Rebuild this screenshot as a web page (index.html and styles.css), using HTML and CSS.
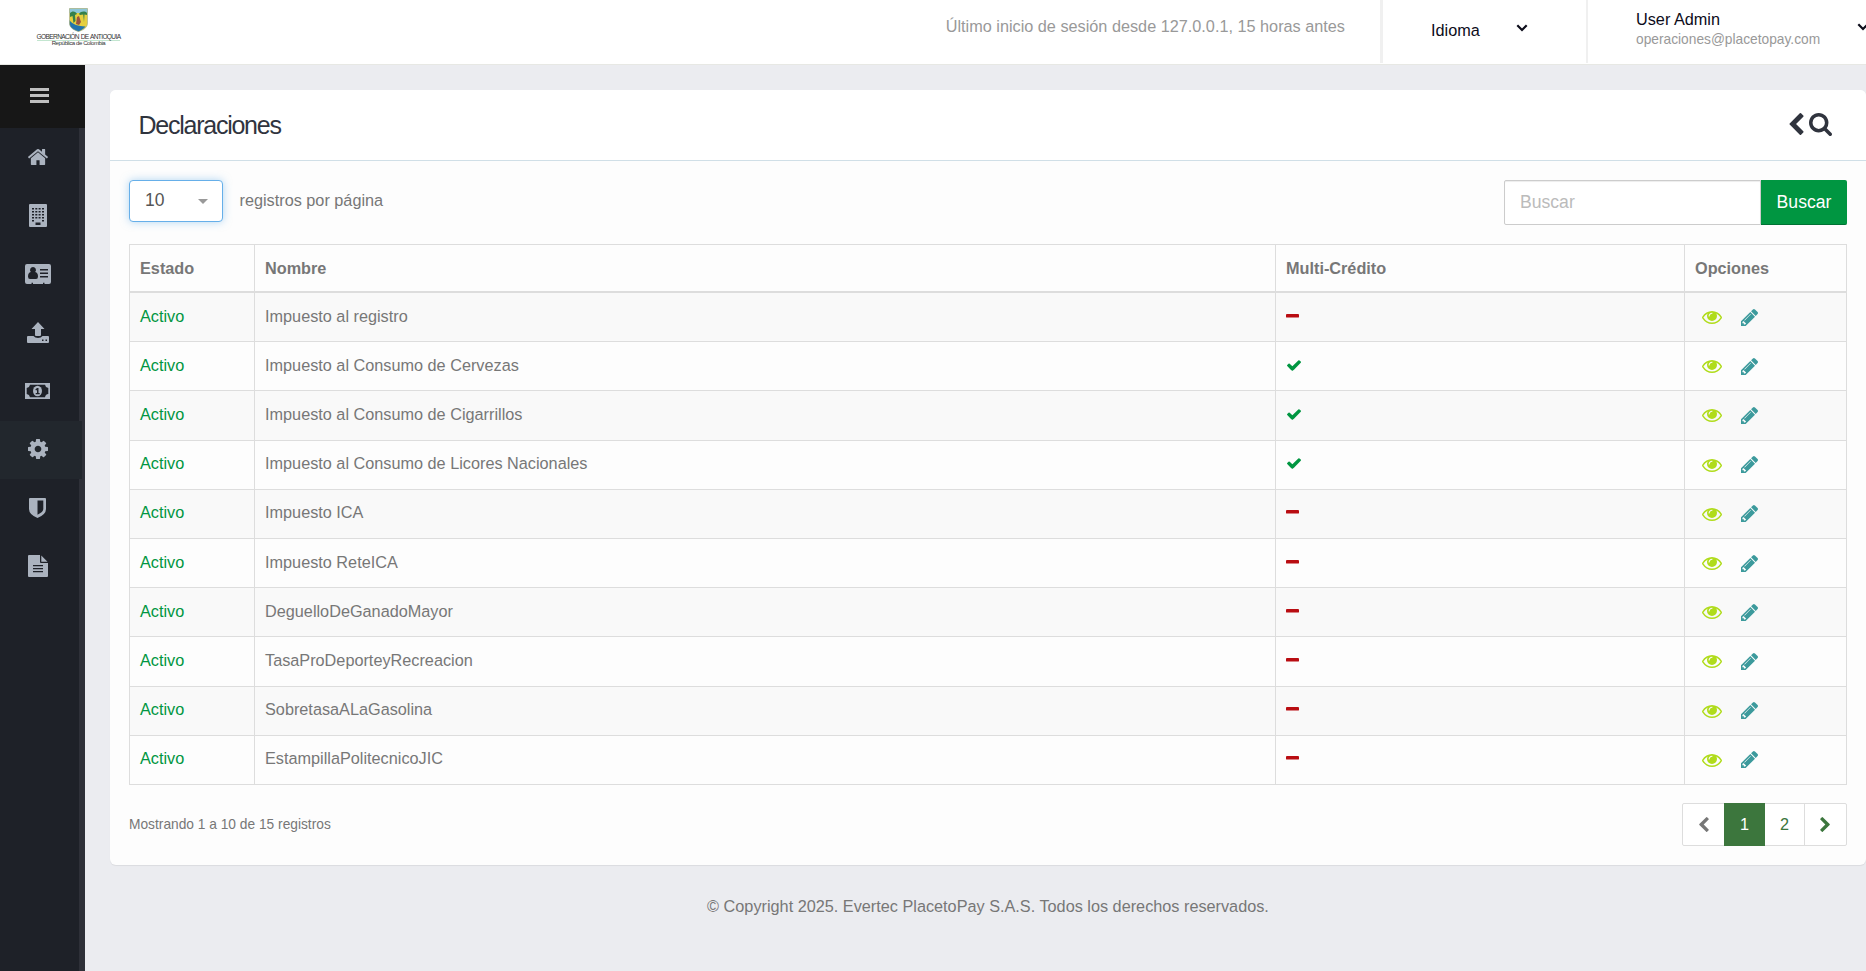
FILE: index.html
```html
<!DOCTYPE html>
<html lang="es">
<head>
<meta charset="utf-8">
<title>Declaraciones</title>
<link rel="stylesheet" href="styles.css">
</head>
<body>
<svg class="defs" width="0" height="0" aria-hidden="true">
  <symbol id="eye" viewBox="0 384 1792 1152"><path d="M1664 960q-152-236-381-353 61 104 61 225 0 185-131.500 316.500t-316.500 131.500-316.500-131.500-131.500-316.500q0-121 61-225-229 117-381 353 133 205 333.500 326.500t434.500 121.500 434.500-121.500 333.500-326.500zm-720-384q0-20-14-34t-34-14q-125 0-214.500 89.500t-89.500 214.500q0 20 14 34t34 14 34-14 14-34q0-86 61-147t147-61q20 0 34-14t14-34zm848 384q0 34-20 69-140 230-376.500 368.500t-499.500 138.500-499.500-139-376.500-368q-20-35-20-69t20-69q140-229 376.500-368t499.500-139 499.500 139 376.500 368q20 35 20 69z"/></symbol>
  <symbol id="pencil" viewBox="128 149 1515 1515"><path d="M491 1536l91-91-235-235-91 91v107h128v128h107zm523-928q0-22-22-22-10 0-17 7l-542 542q-7 7-7 17 0 22 22 22 10 0 17-7l542-542q7-7 7-17zm-54-192l416 416-832 832h-416v-416zm683 96q0 53-37 90l-166 166-416-416 166-165q36-38 90-38 53 0 91 38l235 234q37 39 37 91z"/></symbol>
  <symbol id="check" viewBox="121 334 1550 1188"><path d="M1671 566q0 40-28 68l-724 724-136 136q-28 28-68 28t-68-28l-136-136-362-362q-28-28-28-68t28-68l136-136q28-28 68-28t68 28l294 295 656-657q28-28 68-28t68 28l136 136q28 28 28 68z"/></symbol>
  <symbol id="minus" viewBox="0 0 13 4"><rect width="13" height="3.600" rx="0.900"/></symbol>
  <symbol id="chevron" viewBox="410 26 1036 1612"><path d="M1427 301l-531 531 531 531q19 19 19 45t-19 45l-166 166q-19 19-45 19t-45-19l-742-742q-19-19-19-45t19-45l742-742q19-19 45-19t45 19l166 166q19 19 19 45t-19 45z"/></symbol>
  <symbol id="caret" viewBox="0 0 12 8"><path d="M1.300 1.300L6 6l4.700-4.700" fill="none" stroke="currentColor" stroke-width="2.200"/></symbol>
</svg>

<header class="topbar">
  <div class="brand">
    <svg class="shield" viewBox="0 0 19 24">
      <path d="M.5.5h18V15c0 5-4.500 7-9 8.500C5 22 .5 20 .5 15z" fill="#e6cf3f"/>
      <path d="M.5.5h18v4.500H.5z" fill="#8cc6d8"/>
      <path d="M.5 12c3 5 9 6 16 6.500-2 2.500-4.500 4-7 5C5 22 .5 20 .5 15z" fill="#2374ad"/>
      <path d="M1 5c2-2.500 6-2 7 1l-2 1 .5 6-2 2-1-7-2.500 1zM10 6c2-3 6-3 8-1v2l-2.500-.5L15 14l-.8-7.500-3.200.5z" fill="#35804a"/>
      <path d="M8 9l2-1 2 6-2 3-3-1z" fill="#9b5340"/>
      <path d="M.5.500h18V15c0 5-4.500 7-9 8.500C5 22 .5 20 .5 15z" fill="none" stroke="#9fa98a" stroke-width=".6"/>
    </svg>
    <span class="brand-name">GOBERNACIÓN DE ANTIOQUIA</span>
    <span class="brand-sub">República de Colombia</span>
  </div>
  <div class="last-login">Último inicio de sesión desde 127.0.0.1, 15 horas antes</div>
  <div class="language"><span>Idioma</span><svg class="caret"><use href="#caret"/></svg></div>
  <div class="user">
    <div><div class="user-name">User Admin</div><div class="user-mail">operaciones@placetopay.com</div></div>
    <svg class="caret"><use href="#caret"/></svg>
  </div>
</header>

<div class="shell">
  <nav class="sidebar">
    <a class="toggle"><svg width="19" height="15" viewBox="0 0 19 15"><path d="M0 0h19v3H0zM0 6h19v3H0zM0 12h19v3H0z"/></svg></a>
    <div class="menu">
      <a><svg width="20" height="16" viewBox="89 253 1614 1283" preserveAspectRatio="none"><path d="M1472 992v480q0 26-19 45t-45 19h-384v-384h-256v384h-384q-26 0-45-19t-19-45v-480q0-1 .5-3t.5-3l575-474 575 474q1 2 1 6zm223-69l-62 74q-8 9-21 11h-3q-13 0-21-7l-692-577-692 577q-12 8-24 7-13-2-21-11l-62-74q-8-10-7-23.500t11-21.500l719-599q32-26 76-26t76 26l244 204v-195q0-14 9-23t23-9h192q14 0 23 9t9 23v408l219 182q10 8 11 21.500t-7 23.500z"/></svg></a>
      <a><svg width="18" height="23" viewBox="0 0 18 23"><path fill-rule="evenodd" d="M1 0h16q1 0 1 1v21q0 1-1 1H1q-1 0-1-1V1q0-1 1-1zM6.500 18.500h5V21h-5zM3 4h2v1.500H3zM6.300 4h2v1.500h-2zM9.600 4h2v1.500h-2zM13 4h2v1.500h-2zM3 7h2v1.500H3zM6.300 7h2v1.500h-2zM9.600 7h2v1.500h-2zM13 7h2v1.500h-2zM3 10h2v1.500H3zM6.300 10h2v1.500h-2zM9.600 10h2v1.500h-2zM13 10h2v1.500h-2zM3 13h2v1.500H3zM6.300 13h2v1.500h-2zM9.600 13h2v1.500h-2zM13 13h2v1.500h-2zM3 16h2v1.500H3zM13 16h2v1.500h-2z"/></svg></a>
      <a><svg class="wide" width="26" height="20" viewBox="0 0 26 20"><path fill-rule="evenodd" d="M2 0h22q2 0 2 2v16q0 2-2 2h-4.500v-1.300h-1.500V20H8v-1.300H6.500V20H2q-2 0-2-2V2q0-2 2-2zM8 3a3 3 0 0 0-2.200 5Q3 8.500 3 12.500 3 15 5 15h6q2 0 2-2.500 0-4-2.800-4.500A3 3 0 0 0 8 3zM15 5v1.500h8V5zM15 8.500V10h8V8.500zM15 12v1.500h8V12z"/></svg></a>
      <a><svg width="22" height="21" viewBox="0 0 22 21"><path fill-rule="evenodd" d="M11 0l6.500 7H14v6q0 1-1 1H9q-1 0-1-1V7H4.500zM1 14h5.500q1.500 2 4.500 2t4.500-2H21q1 0 1 1v5q0 1-1 1H1q-1 0-1-1v-5q0-1 1-1zM15 17.500V19h1.500v-1.500zM18.500 17.500V19H20v-1.500z"/></svg></a>
      <a><svg class="money" width="25" height="16" viewBox="0 0 25 16"><path fill-rule="evenodd" d="M0 0h25v16H0zM5 1.700Q4.600 4.600 1.700 5v6q2.900.400 3.300 3.300h15q.400-2.900 3.300-3.300V5Q20.400 4.600 20 1.700z"/><ellipse cx="12.500" cy="8" rx="4.500" ry="5.300"/><path d="M12 5h1.500v5h1.200v1.200h-4V10H12V7l-1 .6-.7-1z" fill="#1e2128"/></svg></a>
      <a class="active"><svg width="20" height="20" viewBox="128 128 1536 1536"><path d="M1152 896q0-106-75-181t-181-75-181 75-75 181 75 181 181 75 181-75 75-181zm512-109v222q0 12-8 23t-20 13l-185 28q-19 54-39 91 35 50 107 138 10 12 10 25t-9 23q-27 37-99 108t-94 71q-12 0-26-9l-138-108q-44 23-91 38-16 136-29 186-7 28-36 28h-222q-14 0-24.500-8.500t-11.500-21.500l-28-184q-49-16-90-37l-141 107q-10 9-25 9-14 0-25-11-126-114-165-168-7-10-7-23 0-12 8-23 15-21 51-66.500t54-70.500q-27-50-41-99l-183-27q-13-2-21-12.500t-8-23.500v-222q0-12 8-23t19-13l186-28q14-46 39-92-40-57-107-138-10-12-10-24 0-10 9-23 26-36 98.500-107.500t94.500-71.500q13 0 26 10l138 107q44-23 91-38 16-136 29-186 7-28 36-28h222q14 0 24.500 8.500t11.500 21.500l28 184q49 16 90 37l142-107q9-9 24-9 13 0 25 10 129 119 165 170 7 8 7 22 0 12-8 23-15 21-51 66.500t-54 70.500q26 50 41 98l183 28q13 2 21 12.500t8 23.500z"/></svg></a>
      <a><svg width="17" height="20" viewBox="0 0 17 20"><path fill-rule="evenodd" d="M1 0h15q1 0 1 1v10q0 5.500-8.500 9Q0 16.500 0 11V1q0-1 1-1zM8.500 2.500v14.200q5.800-2.700 5.800-5.700V2.500z"/></svg></a>
      <a><svg width="20" height="22" viewBox="0 0 20 22"><path fill-rule="evenodd" d="M1 0h11v7q0 1 1 1h7v13q0 1-1 1H1q-1 0-1-1V1q0-1 1-1zM13.300.500L19.500 6.700H13.300zM5 10v1.300h10V10zM5 13v1.300h10V13zM5 16v1.300h10V16z"/></svg></a>
    </div>
  </nav>

  <main class="content">
    <section class="card">
      <div class="card-head">
        <h1>Declaraciones</h1>
        <div class="tools">
          <svg width="15" height="22"><use href="#chevron"/></svg>
          <svg width="23" height="23" viewBox="64 128 1664 1664"><path d="M1216 832q0-185-131.500-316.500t-316.500-131.500-316.500 131.500-131.500 316.500 131.500 316.500 316.500 131.500 316.500-131.500 131.500-316.500zm512 832q0 52-38 90t-90 38q-54 0-90-38l-343-342q-179 124-399 124-143 0-273.500-55.500t-225-150-150-225-55.500-273.500 55.500-273.500 150-225 225-150 273.500-55.500 273.500 55.500 225 150 150 225 55.500 273.500q0 220-124 399l343 343q37 37 37 90z"/></svg>
        </div>
      </div>
      <div class="card-body">
        <div class="filters">
          <div class="select"><span>10</span><i class="arrow"></i></div>
          <span class="per-page">registros por página</span>
          <div class="search"><div class="field">Buscar</div><div class="button">Buscar</div></div>
        </div>
        <table>
          <colgroup><col class="c1"><col class="c2"><col class="c3"><col class="c4"></colgroup>
          <thead><tr><th>Estado</th><th>Nombre</th><th>Multi-Crédito</th><th>Opciones</th></tr></thead>
          <tbody>
            <tr><td class="on">Activo</td><td>Impuesto al registro</td><td><svg class="minus"><use href="#minus"/></svg></td><td><div class="opts"><svg class="eye"><use href="#eye"/></svg><svg class="pencil"><use href="#pencil"/></svg></div></td></tr>
            <tr><td class="on">Activo</td><td>Impuesto al Consumo de Cervezas</td><td><svg class="check"><use href="#check"/></svg></td><td><div class="opts"><svg class="eye"><use href="#eye"/></svg><svg class="pencil"><use href="#pencil"/></svg></div></td></tr>
            <tr><td class="on">Activo</td><td>Impuesto al Consumo de Cigarrillos</td><td><svg class="check"><use href="#check"/></svg></td><td><div class="opts"><svg class="eye"><use href="#eye"/></svg><svg class="pencil"><use href="#pencil"/></svg></div></td></tr>
            <tr><td class="on">Activo</td><td>Impuesto al Consumo de Licores Nacionales</td><td><svg class="check"><use href="#check"/></svg></td><td><div class="opts"><svg class="eye"><use href="#eye"/></svg><svg class="pencil"><use href="#pencil"/></svg></div></td></tr>
            <tr><td class="on">Activo</td><td>Impuesto ICA</td><td><svg class="minus"><use href="#minus"/></svg></td><td><div class="opts"><svg class="eye"><use href="#eye"/></svg><svg class="pencil"><use href="#pencil"/></svg></div></td></tr>
            <tr><td class="on">Activo</td><td>Impuesto ReteICA</td><td><svg class="minus"><use href="#minus"/></svg></td><td><div class="opts"><svg class="eye"><use href="#eye"/></svg><svg class="pencil"><use href="#pencil"/></svg></div></td></tr>
            <tr><td class="on">Activo</td><td>DeguelloDeGanadoMayor</td><td><svg class="minus"><use href="#minus"/></svg></td><td><div class="opts"><svg class="eye"><use href="#eye"/></svg><svg class="pencil"><use href="#pencil"/></svg></div></td></tr>
            <tr><td class="on">Activo</td><td>TasaProDeporteyRecreacion</td><td><svg class="minus"><use href="#minus"/></svg></td><td><div class="opts"><svg class="eye"><use href="#eye"/></svg><svg class="pencil"><use href="#pencil"/></svg></div></td></tr>
            <tr><td class="on">Activo</td><td>SobretasaALaGasolina</td><td><svg class="minus"><use href="#minus"/></svg></td><td><div class="opts"><svg class="eye"><use href="#eye"/></svg><svg class="pencil"><use href="#pencil"/></svg></div></td></tr>
            <tr><td class="on">Activo</td><td>EstampillaPolitecnicoJIC</td><td><svg class="minus"><use href="#minus"/></svg></td><td><div class="opts"><svg class="eye"><use href="#eye"/></svg><svg class="pencil"><use href="#pencil"/></svg></div></td></tr>
          </tbody>
        </table>
        <div class="summary">
          <span>Mostrando 1 a 10 de 15 registros</span>
          <div class="pages">
            <a class="prev"><svg width="10" height="15"><use href="#chevron"/></svg></a><a class="current">1</a><a class="two">2</a><a class="next"><svg class="flip" width="10" height="15"><use href="#chevron"/></svg></a>
          </div>
        </div>
      </div>
    </section>
    <footer>© Copyright 2025. Evertec PlacetoPay S.A.S. Todos los derechos reservados.</footer>
  </main>
</div>
</body>
</html>
```

FILE: styles.css
```css
* { box-sizing: border-box; }
body {
  margin: 0;
  height: 971px;
  overflow: hidden;
  background: #ebecf0;
  color: #777;
  font: 16.250px/24px "Liberation Sans", Arial, sans-serif;
}
svg { display: block; fill: currentColor; flex: none; }
.defs { position: absolute; }

.topbar {
  display: flex;
  height: 65px;
  background: #fff;
  border-bottom: 1px solid #e7e8e4;
  white-space: nowrap;
  overflow: hidden;
}
.topbar > div { flex: none; }
.brand {
  width: 157px;
  padding-top: 8px;
  display: flex;
  flex-direction: column;
  align-items: center;
  color: #333;
}
.shield { width: 19px; height: 24px; }
.brand-name { margin-top: 1px; font-size: 6.600px; line-height: 7px; letter-spacing: -.65px; word-spacing: .6px; border-bottom: 1px solid #c3e6d0; }
.brand-sub { font-size: 6px; line-height: 5px; letter-spacing: -.4px; }
.last-login { width: 1223px; padding: 14px 35px 0 0; text-align: right; color: #999; }
.language, .user { display: flex; height: 63px; color: #0c0c1a; }
.language { width: 206px; padding: 18px 0 0 48px; border-left: 3px solid #f0f0f0; }
.language span { width: 50px; }
.language .caret { margin: 6px 0 0 35px; }
.user { width: 290px; padding: 8px 0 0 48px; border-left: 2px solid #f0f0f0; }
.user > div { width: 221px; }
.user .caret { margin-top: 15px; }
.user-name { line-height: 23px; }
.user-mail { font-size: 13.750px; line-height: 17px; color: #999; }
.caret { width: 12px; height: 8px; }

.shell { display: flex; height: 906px; }
.sidebar { width: 85px; flex: none; background: #2e3038; color: #abb3bf; }
.toggle { display: flex; height: 63px; padding: 23px 0 0 30px; background: #171717; color: #bfbfbf; }
.menu { width: 79px; height: 843px; background: #1e2128; }
.menu a { display: flex; width: 75px; height: 58.500px; align-items: center; justify-content: center; padding-bottom: 1px; }
.menu .active { width: 82px; padding-right: 7px; background: #22272d; }
.menu .wide { margin-left: 1px; }

.content { flex: 1; padding: 25px 0 0 25px; }
.card { height: 775px; border-radius: 6px; background: #fdfdfd; box-shadow: 0 1px 1px rgba(0, 0, 0, .07); }
.card-head {
  display: flex;
  justify-content: space-between;
  height: 71px;
  padding: 18px 34px 0 28.500px;
  border-bottom: 1px solid #d0dfe7;
  border-radius: 6px 6px 0 0;
  background: #fff;
  color: #30343e;
}
h1 { margin: 0; font-size: 25px; line-height: 34px; font-weight: 400; letter-spacing: -1.250px; }
.tools { display: flex; gap: 5.500px; padding-top: 5px; align-items: flex-start; }
.card-body { padding: 19px 19px 0; }
.filters { display: flex; height: 64px; align-items: flex-start; }
.select {
  display: flex;
  justify-content: space-between;
  width: 94px;
  height: 42px;
  padding: 7px 14px 0 15px;
  border: 1px solid #66afe9;
  border-radius: 4px;
  background: #fff;
  box-shadow: 0 0 8px rgba(102, 175, 233, .5);
  color: #555;
  font-size: 17.500px;
}
.arrow { margin-top: 11px; width: 10px; height: 5px; background: #999; clip-path: polygon(0 0, 100% 0, 50% 100%); }
.per-page { margin: 8px 0 0 16.500px; }
.search { display: flex; margin-left: auto; font-size: 17.600px; line-height: 43px; }
.field {
  width: 257px;
  height: 45px;
  padding-left: 15px;
  border: 1px solid #ccc;
  border-radius: 2px 0 0 2px;
  background: #fff;
  box-shadow: inset 0 1px 1px rgba(0, 0, 0, .075);
  color: #bbb;
}
.button { width: 86px; height: 45px; padding-top: 1px; border-bottom: 1px solid #007234; border-radius: 0 2px 2px 0; background: #009641; color: #fff; text-align: center; }

table { width: 1718px; table-layout: fixed; border-collapse: separate; border-spacing: 0; border: solid #ddd; border-width: 1px 0 0 1px; }
.c1 { width: 125px; }
.c2 { width: 1021px; }
.c3 { width: 409px; }
.c4 { width: 162px; }
th, td { padding: 0 10px; text-align: left; border-right: 1px solid #ddd; border-bottom: 1px solid #ddd; }
th { height: 48px; padding-bottom: 1px; border-bottom-width: 2px; }
td { height: 49.200px; padding-bottom: 3px; }
tbody tr:nth-child(odd) { background: #f9f9f9; }
.on { color: #009641; }
.minus { width: 13px; height: 4px; color: #b90d12; }
.check { width: 14px; height: 11px; margin: 1px 0 0 1px; color: #009641; }
.opts { display: flex; gap: 19px; padding: 2px 0 0 7px; align-items: center; }
.eye { width: 20px; height: 13px; margin-top: 2px; color: #b0dc1b; }
.pencil { width: 17px; height: 17px; margin-top: 1px; color: #3c9a9c; }

.summary { display: flex; justify-content: space-between; padding-top: 18px; font-size: 13.750px; }
.summary > span { padding-top: 10px; }
.pages { display: flex; width: 165px; height: 43px; border: 1px solid #ddd; border-radius: 2px; background: #fff; color: #3c763d; font-size: 16.250px; }
.pages a { display: flex; align-items: center; justify-content: center; }
.prev { width: 41px; padding-left: 1px; color: #777; }
.pages .current { width: 41px; margin: -1px 0; background: #3c763d; color: #fff; }
.two { width: 40px; border-right: 1px solid #ddd; }
.next { width: 41px; padding-right: 1px; }
.flip { transform: scaleX(-1); }

footer { padding-top: 29px; text-align: center; }
```
